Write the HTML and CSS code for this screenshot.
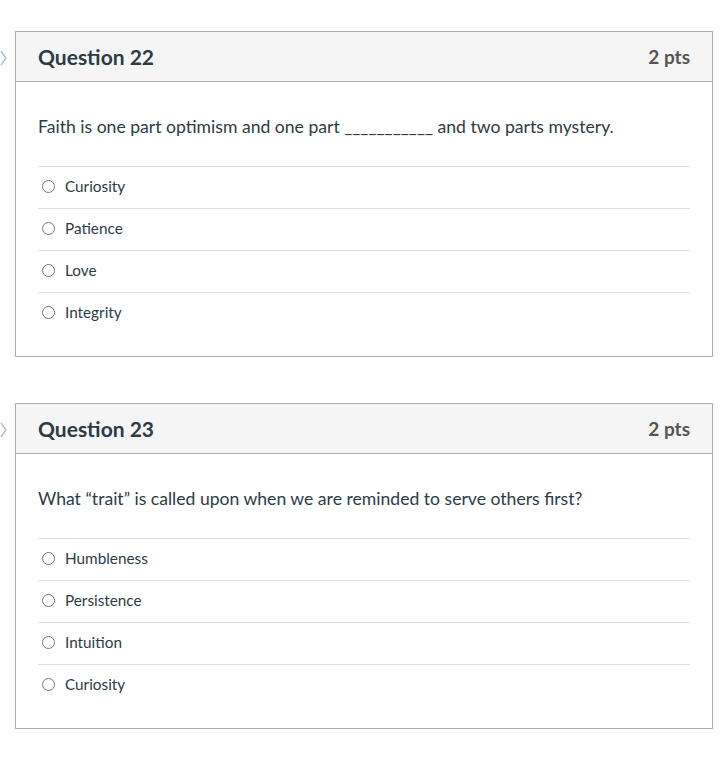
FILE: index.html
```html
<!DOCTYPE html>
<html>
<head>
<meta charset="utf-8">
<link rel="stylesheet" href="styles.css">
</head>
<body>
<div class="page">
  <div class="question">
    <svg class="chev" width="8" height="16" viewBox="0 0 8 16"><path d="M1 1 L6 8 L1 15" fill="none" stroke="#a9bbd3" stroke-width="1.3"/></svg>
    <div class="q-header">
      <span class="q-title">Question 22</span>
      <span class="q-pts">2 pts</span>
    </div>
    <div class="q-body">
      <p class="q-text">Faith is one part optimism and one part ___________ and two parts mystery.</p>
      <ul class="answers">
        <li class="answer"><span class="radio"></span>Curiosity</li>
        <li class="answer"><span class="radio"></span>Patience</li>
        <li class="answer"><span class="radio"></span>Love</li>
        <li class="answer"><span class="radio"></span>Integrity</li>
      </ul>
    </div>
  </div>
  <div class="question">
    <svg class="chev" width="8" height="16" viewBox="0 0 8 16"><path d="M1 1 L6 8 L1 15" fill="none" stroke="#a9bbd3" stroke-width="1.3"/></svg>
    <div class="q-header">
      <span class="q-title">Question 23</span>
      <span class="q-pts">2 pts</span>
    </div>
    <div class="q-body">
      <p class="q-text">What “trait” is called upon when we are reminded to serve others first?</p>
      <ul class="answers">
        <li class="answer"><span class="radio"></span>Humbleness</li>
        <li class="answer"><span class="radio"></span>Persistence</li>
        <li class="answer"><span class="radio"></span>Intuition</li>
        <li class="answer"><span class="radio"></span>Curiosity</li>
      </ul>
    </div>
  </div>
</div>
</body>
</html>
```
FILE: styles.css
```css
html, body {
  margin: 0;
  padding: 0;
  background: #fff;
}
body {
  font-family: Lato, "Open Sans", sans-serif;
  color: #2d3b45;
}
.page {
  padding: 31px 0 0 15px;
  width: 698px;
  display: flex;
  flex-direction: column;
  gap: 46px;
}
.question {
  position: relative;
  border: 1px solid #adadad;
}
.chev {
  position: absolute;
  left: -16px;
  top: 18px;
}
.q-header {
  height: 49px;
  background: #f5f5f5;
  border-bottom: 1px solid #adadad;
  display: flex;
  align-items: center;
  justify-content: space-between;
  padding: 0 22px;
}
.q-title {
  font-size: 21px;
  font-weight: 700;
  color: #2d3b45;
}
.q-pts {
  font-size: 19px;
  font-weight: 700;
  color: #555;
}
.q-body {
  padding: 33px 22px 22px;
}
.q-text {
  margin: 0 0 27px;
  font-size: 17.6px;
  line-height: 24px;
}
.answers {
  list-style: none;
  margin: 0;
  padding: 0;
}
.answer {
  height: 38px;
  padding-bottom: 3px;
  border-top: 1px solid #dddddd;
  display: flex;
  align-items: center;
  font-size: 15.3px;
}
.radio {
  width: 11px;
  height: 11px;
  border: 1px solid #777;
  border-radius: 50%;
  margin: 0 10px 0 4px;
  box-sizing: content-box;
}
```
